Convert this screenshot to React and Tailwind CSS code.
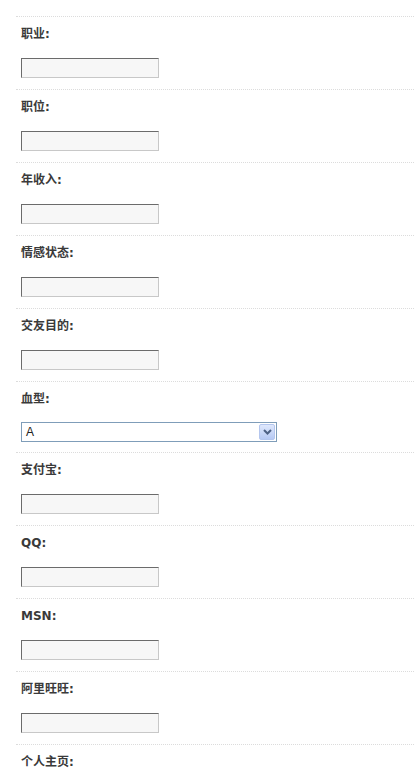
import React from 'react';

const fields = [
    { label: '职业:', type: 'input' },
    { label: '职位:', type: 'input' },
    { label: '年收入:', type: 'input' },
    { label: '情感状态:', type: 'input' },
    { label: '交友目的:', type: 'input' },
    { label: '血型:', type: 'select' },
    { label: '支付宝:', type: 'input' },
    { label: 'QQ:', type: 'input' },
    { label: 'MSN:', type: 'input' },
    { label: '阿里旺旺:', type: 'input' },
    { label: '个人主页:', type: 'input' },
];

function Field({ label, type }) {
    return (
        <div className={`border-t border-dotted border-[#dcdcdc] pt-[9px] pl-[5px] ${type === 'select' ? 'pb-[10px]' : 'pb-[11px]'}`}>
            <div className='h-[15px] leading-[16px] text-[12px] font-bold text-[#3a3a3a]'>{label}</div>
            {type === 'select' ? (
                <div className='mt-[16px] w-[256px] h-[20px] border border-[#7f9db9] bg-white flex items-center justify-between'>
                    <span className='pl-[4px] text-[12px] text-[#222] font-normal' style={{ fontFamily: '"Liberation Sans", Arial, sans-serif' }}>A</span>
                    <div className='w-[16px] h-[16px] mr-[1px] rounded-[2px] border border-[#b4c6ee] bg-gradient-to-b from-[#dfe8fc] to-[#b6c9f4] flex items-center justify-center'>
                        <svg width='9' height='6' viewBox='0 0 9 6'>
                            <path d='M1 1 L4.5 4.5 L8 1' fill='none' stroke='#4d6185' strokeWidth='2' />
                        </svg>
                    </div>
                </div>
            ) : (
                <input
                    type='text'
                    className='block mt-[17px] w-[138px] h-[20px] bg-[#f7f7f7] border border-t-[#6b6b6b] border-l-[#6b6b6b] border-r-[#c8c8c8] border-b-[#c8c8c8] outline-none'
                />
            )}
        </div>
    );
}

export default function App() {
    return (
        <div className='bg-white min-h-[769px] pl-4 pt-4' style={{ fontFamily: '"DejaVu Sans", "Noto Sans CJK SC", sans-serif' }}>
            {fields.map((f) => (
                <Field key={f.label} label={f.label} type={f.type} />
            ))}
        </div>
    );
}
